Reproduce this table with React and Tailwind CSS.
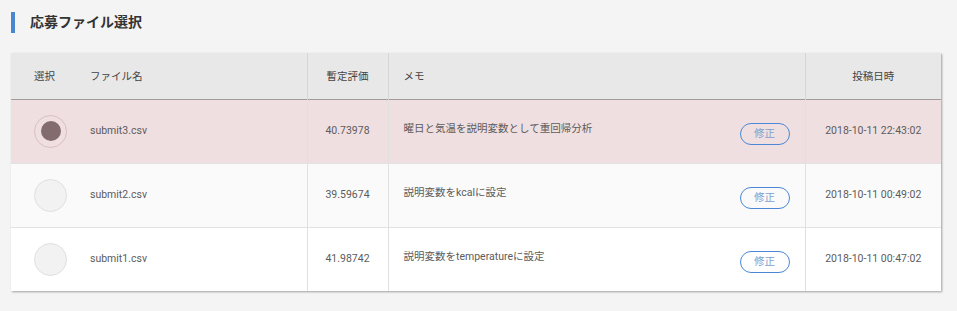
import React, { useState } from 'react';

const rows = [
  { id: 3, file: 'submit3.csv', score: '40.73978', memo: '曜日と気温を説明変数として重回帰分析', date: '2018-10-11 22:43:02' },
  { id: 2, file: 'submit2.csv', score: '39.59674', memo: '説明変数をkcalに設定', date: '2018-10-11 00:49:02' },
  { id: 1, file: 'submit1.csv', score: '41.98742', memo: '説明変数をtemperatureに設定', date: '2018-10-11 00:47:02' },
];

const Radio = ({ checked }) => (
  <span
    className={`flex h-[33px] w-[33px] items-center justify-center rounded-full border ${
      checked ? 'border-[#d9bfc1] bg-[#efdfe0]' : 'border-[#e0e0e0] bg-[#f2f2f2]'
    }`}
  >
    {checked && <span className="h-[20px] w-[20px] rounded-full bg-[#836c6e]" />}
  </span>
);

export default function App() {
  const [selected, setSelected] = useState(3);

  return (
    <div className="min-h-[311px] w-[957px] bg-[#f4f4f4] pt-[12px] font-['Roboto','Noto_Sans_CJK_JP',sans-serif] text-[#5c5c5c]">
      {/* Title */}
      <div className="ml-[11px] flex h-[21px] items-center border-l-4 border-[#4a86d0] pl-[15px]">
        <h2 className="text-[14px] font-bold text-[#333]">応募ファイル選択</h2>
      </div>

      {/* Table */}
      <div className="ml-[11px] mt-[20px] w-[930px] bg-white shadow-[1px_1px_2px_rgba(0,0,0,0.35)]">
        <table className="w-full table-fixed border-collapse text-[10.5px]">
          <colgroup>
            <col className="w-[67px]" />
            <col className="w-[229px]" />
            <col className="w-[81px]" />
            <col className="w-[417px]" />
            <col className="w-[136px]" />
          </colgroup>
          <thead>
            <tr className="h-[46px] border-b border-[#a39b9b] bg-[#e8e8e8] text-[#444]">
              <th className="pt-[3px] text-center font-normal">選択</th>
              <th className="pl-[12px] pt-[3px] text-left font-normal">ファイル名</th>
              <th className="border-l border-[#d6d6d6] pt-[3px] text-center font-normal">暫定評価</th>
              <th className="border-l border-[#d6d6d6] pl-[15px] pt-[3px] text-left font-normal">メモ</th>
              <th className="border-l border-[#d6d6d6] pt-[3px] text-center font-normal">投稿日時</th>
            </tr>
          </thead>
          <tbody>
            {rows.map((r, i) => {
              const active = selected === r.id;
              const bg = active ? 'bg-[#f0dfe0]' : i === 1 ? 'bg-[#fafafa]' : 'bg-white';
              return (
                <tr
                  key={r.id}
                  onClick={() => setSelected(r.id)}
                  className={`h-[64px] cursor-pointer border-b border-[#e2e2e2] last:border-b-0 ${bg}`}
                >
                  <td className="pl-[23px]">
                    <Radio checked={active} />
                  </td>
                  <td className="pl-[12px]">{r.file}</td>
                  <td className="border-l border-[#e0e0e0] text-center">{r.score}</td>
                  <td className="border-l border-[#e0e0e0] pl-[15px] pr-[15px]">
                    <div className="flex items-center">
                      <span className="-mt-[4px] min-w-0 flex-1 text-left">{r.memo}</span>
                      <button className="mt-[6px] h-[22px] w-[50px] shrink-0 rounded-full border border-[#4a88d6] text-[10.5px] text-[#7f9fcc]">
                        修正
                      </button>
                    </div>
                  </td>
                  <td className="border-l border-[#e0e0e0] text-center">{r.date}</td>
                </tr>
              );
            })}
          </tbody>
        </table>
      </div>
    </div>
  );
}
